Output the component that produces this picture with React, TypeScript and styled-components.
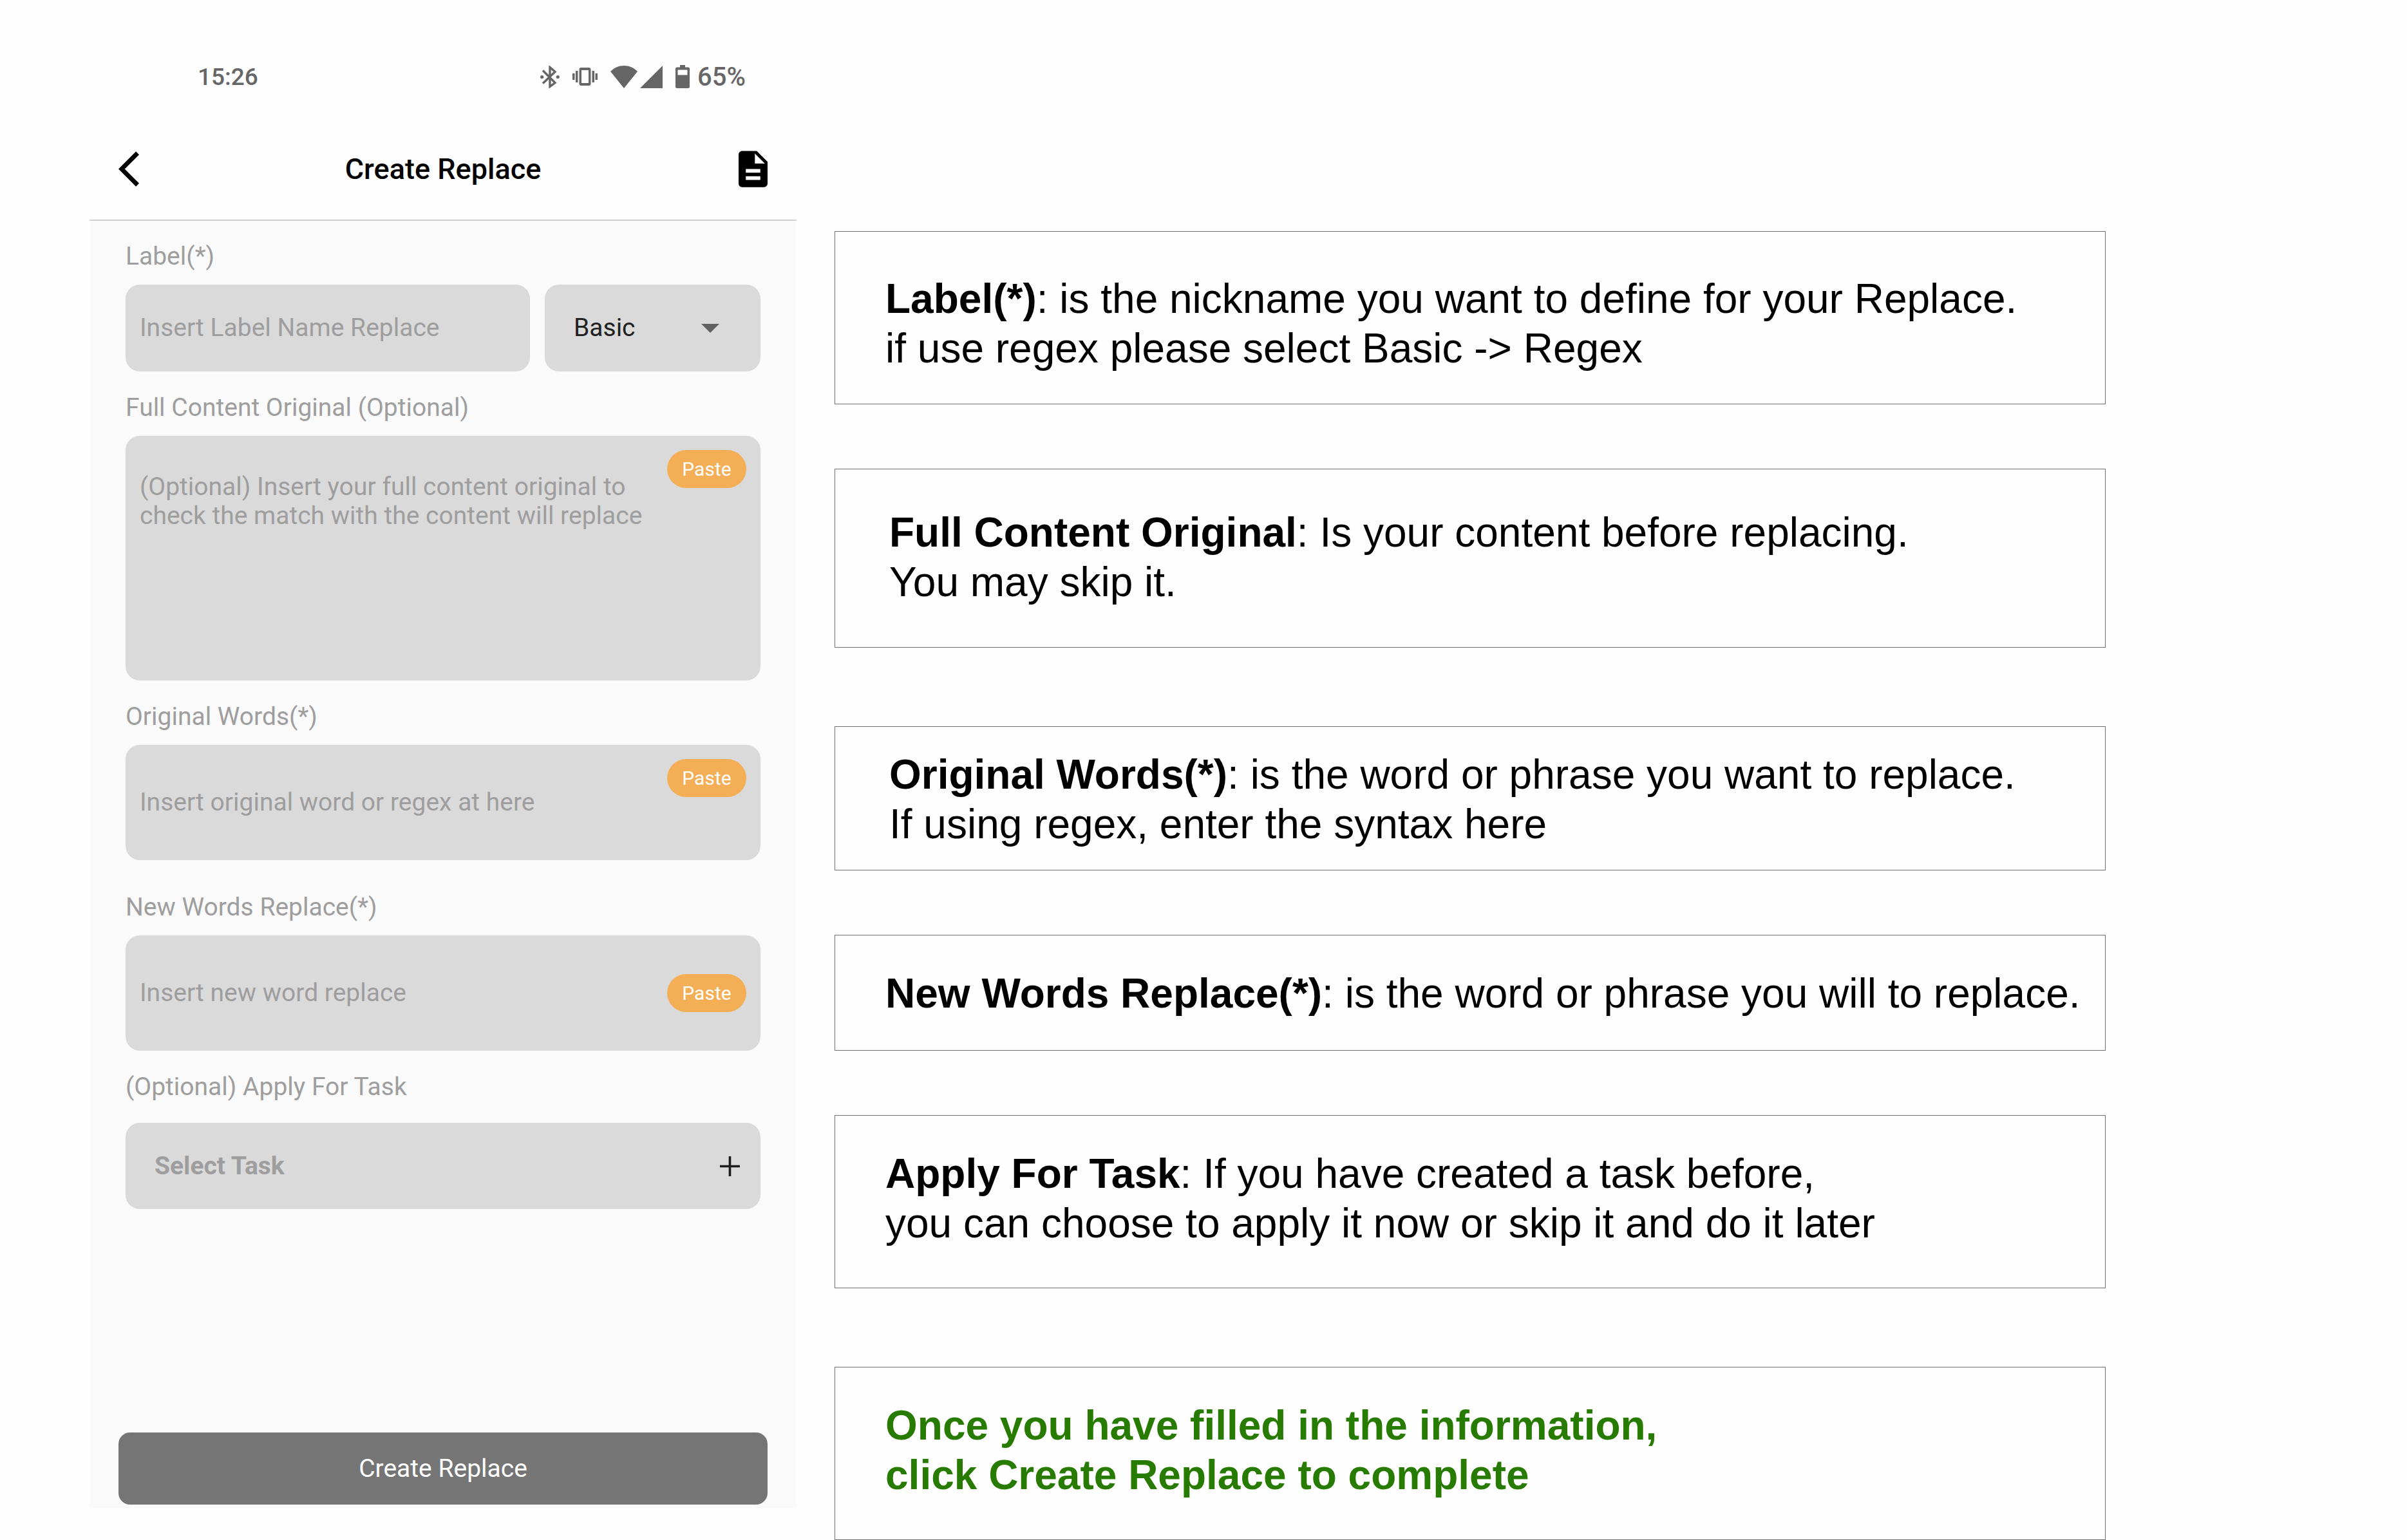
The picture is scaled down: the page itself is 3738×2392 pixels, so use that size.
import React from "react";
import styled, { createGlobalStyle } from "styled-components";

const GlobalStyle = createGlobalStyle`
  *, *::before, *::after { box-sizing: border-box; }
  body { margin: 0; background: #fefefe; }
  button, input, textarea, select {
    margin: 0;
    padding: 0;
    border: 0;
    background: none;
    font: inherit;
    color: inherit;
    outline: none;
  }
  svg { display: block; flex: none; }
`;

const Page = styled.main`
  display: grid;
  grid-template-columns: minmax(0, 1098fr) minmax(0, 1974fr);
  column-gap: 59px;
  min-height: 100vh;
  padding: 0 468px 0 139px;
`;

const Phone = styled.section`
  display: flex;
  flex-direction: column;
  padding-bottom: 49px;
  font-family: Roboto, "Liberation Sans", sans-serif;
  font-size: 39px;
  line-height: 45px;
`;

const StatusBar = styled.div`
  display: flex;
  align-items: center;
  justify-content: space-between;
  height: 184px;
  padding: 54px 79px 0 168px;
  color: #666666;
  font-weight: 500;
`;

const Clock = styled.span`
  font-size: 37px;
`;

const StatusIcons = styled.div`
  display: flex;
  align-items: center;
  gap: 20px;
`;

const IconPair = styled.div`
  display: flex;
  align-items: center;
  gap: 4px;
`;

const Battery = styled.div`
  display: flex;
  align-items: center;
  gap: 12px;
  font-size: 40px;
`;

const Header = styled.header`
  display: grid;
  grid-template-columns: 1fr auto 1fr;
  align-items: center;
  height: 159px;
  padding: 0 45px;
  border-bottom: 2px solid #d0d0d0;
  color: #000000;
`;

const Title = styled.h1`
  margin: 0;
  font-size: 45px;
  font-weight: 500;
  line-height: 52px;
`;

const IconButton = styled.button<{ $end?: boolean }>`
  justify-self: ${(p) => (p.$end ? "end" : "start")};
  cursor: pointer;
`;

const Form = styled.form`
  display: flex;
  flex: 1;
  flex-direction: column;
  padding: 33px 45px 6px;
  background: #fafafa;
`;

const Fields = styled.div`
  display: flex;
  flex-direction: column;
  gap: 34px;
  padding: 0 11px;
`;

const Field = styled.div<{ $loose?: boolean; $spaced?: boolean }>`
  display: flex;
  flex-direction: column;
  gap: ${(p) => (p.$loose ? 33 : 21)}px;
  margin-top: ${(p) => (p.$spaced ? 17 : 0)}px;
`;

const FieldLabel = styled.label`
  color: #9e9e9e;
`;

const Row = styled.div`
  display: grid;
  grid-template-columns: minmax(0, 628fr) minmax(0, 335fr);
  gap: 23px;
`;

const Box = styled.div<{ $height: number }>`
  display: flex;
  align-items: stretch;
  height: ${(p) => p.$height}px;
  border-radius: 22px;
  background: #dadada;
`;

const TextInput = styled.input`
  flex: 1;
  min-width: 0;
  padding: 0 22px;
  color: #212121;
  &::placeholder { color: #9e9e9e; opacity: 1; }
`;

const TextArea = styled.textarea`
  flex: 1;
  min-width: 0;
  padding: 57px 0 0 22px;
  color: #212121;
  resize: none;
  overflow: hidden;
  &::placeholder { color: #9e9e9e; opacity: 1; }
`;

const PasteButton = styled.button<{ $centered?: boolean }>`
  align-self: ${(p) => (p.$centered ? "center" : "flex-start")};
  flex: none;
  width: 123px;
  height: 59px;
  margin: ${(p) => (p.$centered ? 0 : 22)}px 22px 0 22px;
  border-radius: 30px;
  background: #f3ae56;
  color: #ffffff;
  font-size: 30px;
  line-height: 34px;
  cursor: pointer;
`;

const SelectBox = styled.div`
  display: grid;
  align-items: center;
  border-radius: 22px;
  background: #dadada;

  > * { grid-area: 1 / 1; }
  > svg {
    justify-self: end;
    margin-right: 64px;
    pointer-events: none;
  }
`;

const Select = styled.select`
  appearance: none;
  width: 100%;
  height: 100%;
  padding-left: 45px;
  color: #212121;
`;

const TaskButton = styled.button`
  display: flex;
  align-items: center;
  justify-content: space-between;
  height: 134px;
  padding: 0 32px 0 45px;
  border-radius: 22px;
  background: #dadada;
  color: #9e9e9e;
  font-weight: 700;
  cursor: pointer;
`;

const SubmitButton = styled.button`
  height: 112px;
  margin-top: auto;
  border-radius: 18px;
  background: #757575;
  color: #ffffff;
  cursor: pointer;
`;

const Notes = styled.aside`
  display: flex;
  flex-direction: column;
  gap: 122px;
  padding-top: 359px;
  color: #000000;
  font-family: "Liberation Sans", Arial, sans-serif;
  font-size: 64px;
  line-height: 77px;
`;

const NoteGroup = styled.div`
  display: flex;
  flex-direction: column;
  gap: 100px;
`;

const Note = styled.p<{ $top: number; $bottom: number; $inset?: boolean; $done?: boolean }>`
  margin: 0;
  padding: ${(p) => p.$top}px 0 ${(p) => p.$bottom}px ${(p) => (p.$inset ? 84 : 78)}px;
  border: 1px solid #707070;
  color: ${(p) => (p.$done ? "#267b00" : "inherit")};
  font-weight: ${(p) => (p.$done ? 700 : 400)};
  white-space: nowrap;
`;

const BluetoothIcon = () => (
  <svg width="30" height="35" viewBox="0 0 30 35" fill="none" stroke="currentColor" aria-hidden="true">
    <path d="M4 7.500L23 26.500L15 32.500V2.500L23 9.500L4 27.500" strokeWidth="3.400" />
    <circle cx="2.700" cy="17.500" r="2.600" fill="currentColor" stroke="none" />
    <circle cx="27.300" cy="17.500" r="2.600" fill="currentColor" stroke="none" />
  </svg>
);

const VibrateIcon = () => (
  <svg width="39" height="28" viewBox="0 0 39 28" fill="currentColor" aria-hidden="true">
    <path
      fillRule="evenodd"
      d="M13.500 0h12a3 3 0 0 1 3 3v22a3 3 0 0 1-3 3h-12a3 3 0 0 1-3-3V3a3 3 0 0 1 3-3zM14 4v20h11V4z"
    />
    <path d="M0 9h3.500v10H0zM5 5h3.500v18H5zM30.500 5H34v18h-3.500zM35.500 9H39v10h-3.500z" />
  </svg>
);

const WifiIcon = () => (
  <svg width="42" height="35" viewBox="0 0 42 35" fill="currentColor" aria-hidden="true">
    <path d="M21 35L0 9C6 3 13 0 21 0s15 3 21 9z" />
  </svg>
);

const SignalIcon = () => (
  <svg width="35" height="35" viewBox="0 0 35 35" fill="currentColor" aria-hidden="true">
    <path d="M0 35L35 0v35z" />
  </svg>
);

const BatteryIcon = () => (
  <svg width="22" height="36" viewBox="0 0 22 36" fill="currentColor" aria-hidden="true">
    <path
      fillRule="evenodd"
      d="M7 0h8v3.500h4.500a2.500 2.500 0 0 1 2.500 2.500v27.500a2.500 2.500 0 0 1-2.500 2.500h-17A2.500 2.500 0 0 1 0 33.500V6a2.500 2.500 0 0 1 2.500-2.500H7zM3.500 7.500v8h15v-8z"
    />
  </svg>
);

const BackIcon = () => (
  <svg width="32" height="55" viewBox="0 2.100 11.670 19.800" aria-hidden="true">
    <path d="M11.670 3.870L9.900 2.100 0 12l9.900 9.900 1.770-1.770L3.540 12z" />
  </svg>
);

const DocumentIcon = () => (
  <svg width="45" height="57" viewBox="4 2 16 20" aria-hidden="true">
    <path d="M14 2H6c-1.100 0-1.990.9-1.990 2L4 20c0 1.100.89 2 1.990 2H18c1.100 0 2-.9 2-2V8l-6-6zm2 16H8v-2h8v2zm0-4H8v-2h8v2zm-3-5V3.500L18.500 9H13z" />
  </svg>
);

const CaretIcon = () => (
  <svg width="28" height="14" viewBox="0 0 28 14" fill="#616161" aria-hidden="true">
    <path d="M0 0h28L14 14z" />
  </svg>
);

const PlusIcon = () => (
  <svg width="31" height="31" viewBox="0 0 31 31" fill="none" stroke="#1c1c1c" strokeWidth="3.600" aria-hidden="true">
    <path d="M15.500 0v31M0 15.500h31" />
  </svg>
);

export default function App() {
  return (
    <>
      <GlobalStyle />
      <Page>
        <Phone>
          <StatusBar>
            <Clock>15:26</Clock>
            <StatusIcons>
              <BluetoothIcon />
              <VibrateIcon />
              <IconPair>
                <WifiIcon />
                <SignalIcon />
              </IconPair>
              <Battery>
                <BatteryIcon />
                <span>65%</span>
              </Battery>
            </StatusIcons>
          </StatusBar>
          <Header>
            <IconButton type="button" aria-label="Back">
              <BackIcon />
            </IconButton>
            <Title>Create Replace</Title>
            <IconButton type="button" aria-label="Document" $end>
              <DocumentIcon />
            </IconButton>
          </Header>
          <Form onSubmit={(e) => e.preventDefault()}>
            <Fields>
              <Field>
                <FieldLabel htmlFor="label">Label(*)</FieldLabel>
                <Row>
                  <Box $height={135}>
                    <TextInput id="label" placeholder="Insert Label Name Replace" />
                  </Box>
                  <SelectBox>
                    <Select aria-label="Mode" defaultValue="Basic">
                      <option>Basic</option>
                      <option>Regex</option>
                    </Select>
                    <CaretIcon />
                  </SelectBox>
                </Row>
              </Field>
              <Field>
                <FieldLabel htmlFor="content">Full Content Original (Optional)</FieldLabel>
                <Box $height={380}>
                  <TextArea
                    id="content"
                    placeholder="(Optional) Insert your full content original to check the match with the content will replace"
                  />
                  <PasteButton type="button">Paste</PasteButton>
                </Box>
              </Field>
              <Field>
                <FieldLabel htmlFor="original">Original Words(*)</FieldLabel>
                <Box $height={179}>
                  <TextInput id="original" placeholder="Insert original word or regex at here" />
                  <PasteButton type="button">Paste</PasteButton>
                </Box>
              </Field>
              <Field $spaced>
                <FieldLabel htmlFor="replacement">New Words Replace(*)</FieldLabel>
                <Box $height={179}>
                  <TextInput id="replacement" placeholder="Insert new word replace" />
                  <PasteButton type="button" $centered>
                    Paste
                  </PasteButton>
                </Box>
              </Field>
              <Field $loose>
                <FieldLabel htmlFor="task">(Optional) Apply For Task</FieldLabel>
                <TaskButton id="task" type="button">
                  Select Task
                  <PlusIcon />
                </TaskButton>
              </Field>
            </Fields>
            <SubmitButton type="submit">Create Replace</SubmitButton>
          </Form>
        </Phone>
        <Notes>
          <NoteGroup>
            <Note $top={66} $bottom={47}>
              <b>Label(*)</b>: is the nickname you want to define for your Replace.
              <br />
              if use regex please select Basic -&gt; Regex
            </Note>
            <Note $top={60} $bottom={62} $inset>
              <b>Full Content Original</b>: Is your content before replacing.
              <br />
              You may skip it.
            </Note>
          </NoteGroup>
          <NoteGroup>
            <Note $top={36} $bottom={32} $inset>
              <b>Original Words(*)</b>: is the word or phrase you want to replace.
              <br />
              If using regex, enter the syntax here
            </Note>
            <Note $top={52} $bottom={49}>
              <b>New Words Replace(*)</b>: is the word or phrase you will to replace.
            </Note>
            <Note $top={52} $bottom={61}>
              <b>Apply For Task</b>: If you have created a task before,
              <br />
              you can choose to apply it now or skip it and do it later
            </Note>
          </NoteGroup>
          <NoteGroup>
            <Note $top={52} $bottom={61} $done>
              Once you have filled in the information,
              <br />
              click Create Replace to complete
            </Note>
          </NoteGroup>
        </Notes>
      </Page>
    </>
  );
}
